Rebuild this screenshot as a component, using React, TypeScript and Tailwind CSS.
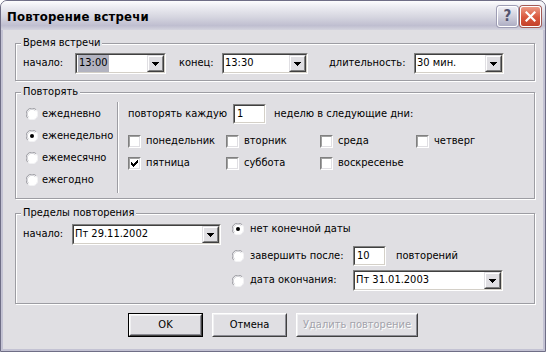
import React from "react";

const sunkenOuter = "border border-t-[#808080] border-l-[#808080] border-b-white border-r-white";
const sunkenInner = "border border-t-[#404040] border-l-[#404040] border-b-[#d4d0c8] border-r-[#d4d0c8]";

function Arrow() {
  return (
    <svg width="7" height="4" viewBox="0 0 7 4" shapeRendering="crispEdges">
      <rect x="0" y="0" width="7" height="1" fill="#000" />
      <rect x="1" y="1" width="5" height="1" fill="#000" />
      <rect x="2" y="2" width="3" height="1" fill="#000" />
      <rect x="3" y="3" width="1" height="1" fill="#000" />
    </svg>
  );
}

function Combo({ className, children }: { className: string; children: React.ReactNode }) {
  return (
    <div className={`${className} h-[21px] flex ${sunkenOuter}`}>
      <div className={`flex-1 flex min-w-0 bg-white ${sunkenInner}`}>
        <div className="flex-1 flex items-center pl-[1px] min-w-0 whitespace-nowrap">{children}</div>
        <div className="w-[17px] flex border border-t-[#e0dfe3] border-l-[#e0dfe3] border-b-[#404040] border-r-[#404040]">
          <div className="flex-1 flex items-center justify-center bg-[#e0dfe3] border border-t-white border-l-white border-b-[#808080] border-r-[#808080]">
            <Arrow />
          </div>
        </div>
      </div>
    </div>
  );
}

function TextBox({ className, children }: { className: string; children: React.ReactNode }) {
  return (
    <div className={`${className} h-[20px] flex ${sunkenOuter}`}>
      <div className={`flex-1 flex items-center pl-[2px] bg-white ${sunkenInner}`}>{children}</div>
    </div>
  );
}

function Radio({ checked }: { checked?: boolean }) {
  return (
    <svg width="12" height="12" viewBox="0 0 12 12" className="shrink-0">
      <circle cx="6" cy="6" r="5.5" fill="#fff" />
      <path d="M10.2 1.8 A5.5 5.5 0 0 0 1.8 10.2" fill="none" stroke="#9a9aa0" strokeWidth="1" />
      <path d="M9.3 2.7 A4.5 4.5 0 0 0 2.7 9.3" fill="none" stroke="#cfcfd4" strokeWidth="1" />
      <path d="M10.2 1.8 A5.5 5.5 0 0 1 1.8 10.2" fill="none" stroke="#f4f4f6" strokeWidth="1" />
      {checked && <circle cx="6" cy="6" r="2" fill="#000" />}
    </svg>
  );
}

function Check({ checked }: { checked?: boolean }) {
  return (
    <div className={`w-[13px] h-[13px] shrink-0 flex ${sunkenOuter}`}>
      <div className="flex-1 flex items-center justify-center bg-white border border-t-[#a0a0a0] border-l-[#a0a0a0] border-b-[#e0dfe3] border-r-[#e0dfe3]">
        {checked && (
          <svg width="7" height="7" viewBox="0 0 7 7" shapeRendering="crispEdges">
            <path d="M6 0h1v1H6zM5 1h2v1H5zM0 2h1v1H0zM4 2h3v1H4zM0 3h2v1H0zM3 3h3v1H3zM0 4h5v1H0zM1 5h3v1H1zM2 6h1v1H2z" fill="#000" />
          </svg>
        )}
      </div>
    </div>
  );
}

function Group({ title, className, children }: { title: string; className: string; children: React.ReactNode }) {
  return (
    <fieldset className={`${className} ml-[12px] w-[520px] border border-[#9d9da3] shadow-[inset_1px_1px_0_#fff,1px_1px_0_#fff]`}>
      <legend className="ml-[5px] px-[2px] leading-[14px] bg-[#e0dfe3]">{title}</legend>
      {children}
    </fieldset>
  );
}

function Btn({ className, children, def, disabled }: { className: string; children: React.ReactNode; def?: boolean; disabled?: boolean }) {
  return (
    <div className={`${className} h-[24px] flex ${def ? "border border-black" : ""}`}>
      <div className="flex-1 flex border border-t-white border-l-white border-b-[#404040] border-r-[#404040]">
        <div className="flex-1 flex items-center justify-center bg-[#e0dfe3] border border-t-[#f0f0f2] border-l-[#f0f0f2] border-b-[#8c8c94] border-r-[#8c8c94]">
          <span className={disabled ? "text-[#a3a3ab] [text-shadow:1px_1px_0_#fff]" : ""}>{children}</span>
        </div>
      </div>
    </div>
  );
}

function TitleBar() {
  return (
    <div className="h-[29px] shrink-0 flex items-center pl-[6px] pr-[4px] pt-[2px] bg-[linear-gradient(to_bottom,#fdfdfe_0%,#eeeef3_18%,#d6d6e0_55%,#bfbed0_85%,#d4d4de_100%)]">
      <div className="flex-1 font-bold text-[13px] tracking-[0.2px]">Повторение встречи</div>
      <div className="flex gap-[2px]">
        <div className="w-[21px] h-[21px] rounded-[3px] border border-white flex items-center justify-center bg-[linear-gradient(to_bottom,#eeeef5,#c9c9d8_60%,#aeaec4)] shadow-[0_0_0_1px_#9e9db4]">
          <span className="font-bold text-[15px] leading-none text-[#53536f]">?</span>
        </div>
        <div className="w-[21px] h-[21px] rounded-[3px] border border-white flex items-center justify-center bg-[linear-gradient(to_bottom,#ec9a85,#d9573d_55%,#c3402b)] shadow-[0_0_0_1px_#a25a55]">
          <svg width="11" height="11" viewBox="0 0 11 11">
            <path d="M1.5 1.5 L9.5 9.5 M9.5 1.5 L1.5 9.5" stroke="#fff" strokeWidth="2.2" strokeLinecap="square" />
          </svg>
        </div>
      </div>
    </div>
  );
}

export default function App() {
  return (
    <div className="w-[546px] h-[352px] font-['DejaVu_Sans_Condensed','DejaVu_Sans',sans-serif] font-stretch-condensed text-[11px] text-black">
      <div className="w-full h-full flex flex-col border border-[#6f6e86] rounded-t-[7px] overflow-hidden bg-[#e0dfe3]">
        <TitleBar />
        <div className="flex-1 flex flex-col border-x-2 border-b-2 border-[#c3c2d3]">
          <Group title="Время встречи" className="mt-[6px] h-[45px]">
            <div className="flex items-center pl-[7px] mt-[3px]">
              <span className="w-[52px]">начало:</span>
              <Combo className="w-[91px]">
                <span className="bg-[#b2b3c0] px-[1px]">13:00</span>
              </Combo>
              <span className="ml-[13px] w-[43px]">конец:</span>
              <Combo className="w-[86px]">13:30</Combo>
              <span className="ml-[21px] w-[85px]">длительность:</span>
              <Combo className="w-[90px]">30 мин.</Combo>
            </div>
          </Group>

          <Group title="Повторять" className="mt-[4px] h-[114px]">
            <div className="flex pt-[4px]">
              <div className="w-[101px] pl-[10px] flex flex-col">
                {[
                  ["ежедневно", false],
                  ["еженедельно", true],
                  ["ежемесячно", false],
                  ["ежегодно", false],
                ].map(([l, c]) => (
                  <div key={l as string} className="h-[22px] flex items-center gap-[4px]">
                    <Radio checked={c as boolean} />
                    <span>{l as string}</span>
                  </div>
                ))}
              </div>
              <div className="w-[2px] h-[91px] -mt-[1px] border-l border-l-[#9d9da3] border-r border-r-white" />
              <div className="pl-[9px] flex flex-col">
                <div className="h-[22px] flex items-center">
                  <span className="w-[105px]">повторять каждую</span>
                  <TextBox className="w-[33px]">1</TextBox>
                  <span className="ml-[8px]">неделю в следующие дни:</span>
                </div>
                <div className="mt-[5px] h-[22px] flex items-center">
                  <div className="w-[98px] flex items-center gap-[5px]"><Check /><span>понедельник</span></div>
                  <div className="w-[94px] flex items-center gap-[5px]"><Check /><span>вторник</span></div>
                  <div className="w-[96px] flex items-center gap-[5px]"><Check /><span>среда</span></div>
                  <div className="flex items-center gap-[5px]"><Check /><span>четверг</span></div>
                </div>
                <div className="h-[22px] flex items-center">
                  <div className="w-[98px] flex items-center gap-[5px]"><Check checked /><span>пятница</span></div>
                  <div className="w-[94px] flex items-center gap-[5px]"><Check /><span>суббота</span></div>
                  <div className="w-[96px] flex items-center gap-[5px]"><Check /><span>воскресенье</span></div>
                </div>
              </div>
            </div>
          </Group>

          <Group title="Пределы повторения" className="mt-[7px] h-[98px]">
            <div className="flex pl-[7px]">
              <div className="flex items-center mt-[4px] h-[21px] self-start">
                <span className="w-[49px]">начало:</span>
                <Combo className="w-[149px]">Пт 29.11.2002</Combo>
              </div>
              <div className="ml-[11px] flex flex-col">
                <div className="h-[18px] flex items-center gap-[6px]">
                  <Radio checked />
                  <span>нет конечной даты</span>
                </div>
                <div className="mt-[7px] h-[22px] flex items-center">
                  <Radio />
                  <span className="ml-[6px] w-[103px]">завершить после:</span>
                  <TextBox className="w-[33px]">10</TextBox>
                  <span className="ml-[10px]">повторений</span>
                </div>
                <div className="mt-[3px] h-[21px] flex items-center">
                  <Radio />
                  <span className="ml-[6px] w-[103px]">дата окончания:</span>
                  <Combo className="w-[150px]">Пт 31.01.2003</Combo>
                </div>
              </div>
            </div>
          </Group>

          <div className="mt-[9px] flex justify-center gap-[9px]">
            <Btn className="w-[75px]" def>OK</Btn>
            <Btn className="w-[75px]">Отмена</Btn>
            <Btn className="w-[122px]" disabled>Удалить повторение</Btn>
          </div>
        </div>
      </div>
    </div>
  );
}
